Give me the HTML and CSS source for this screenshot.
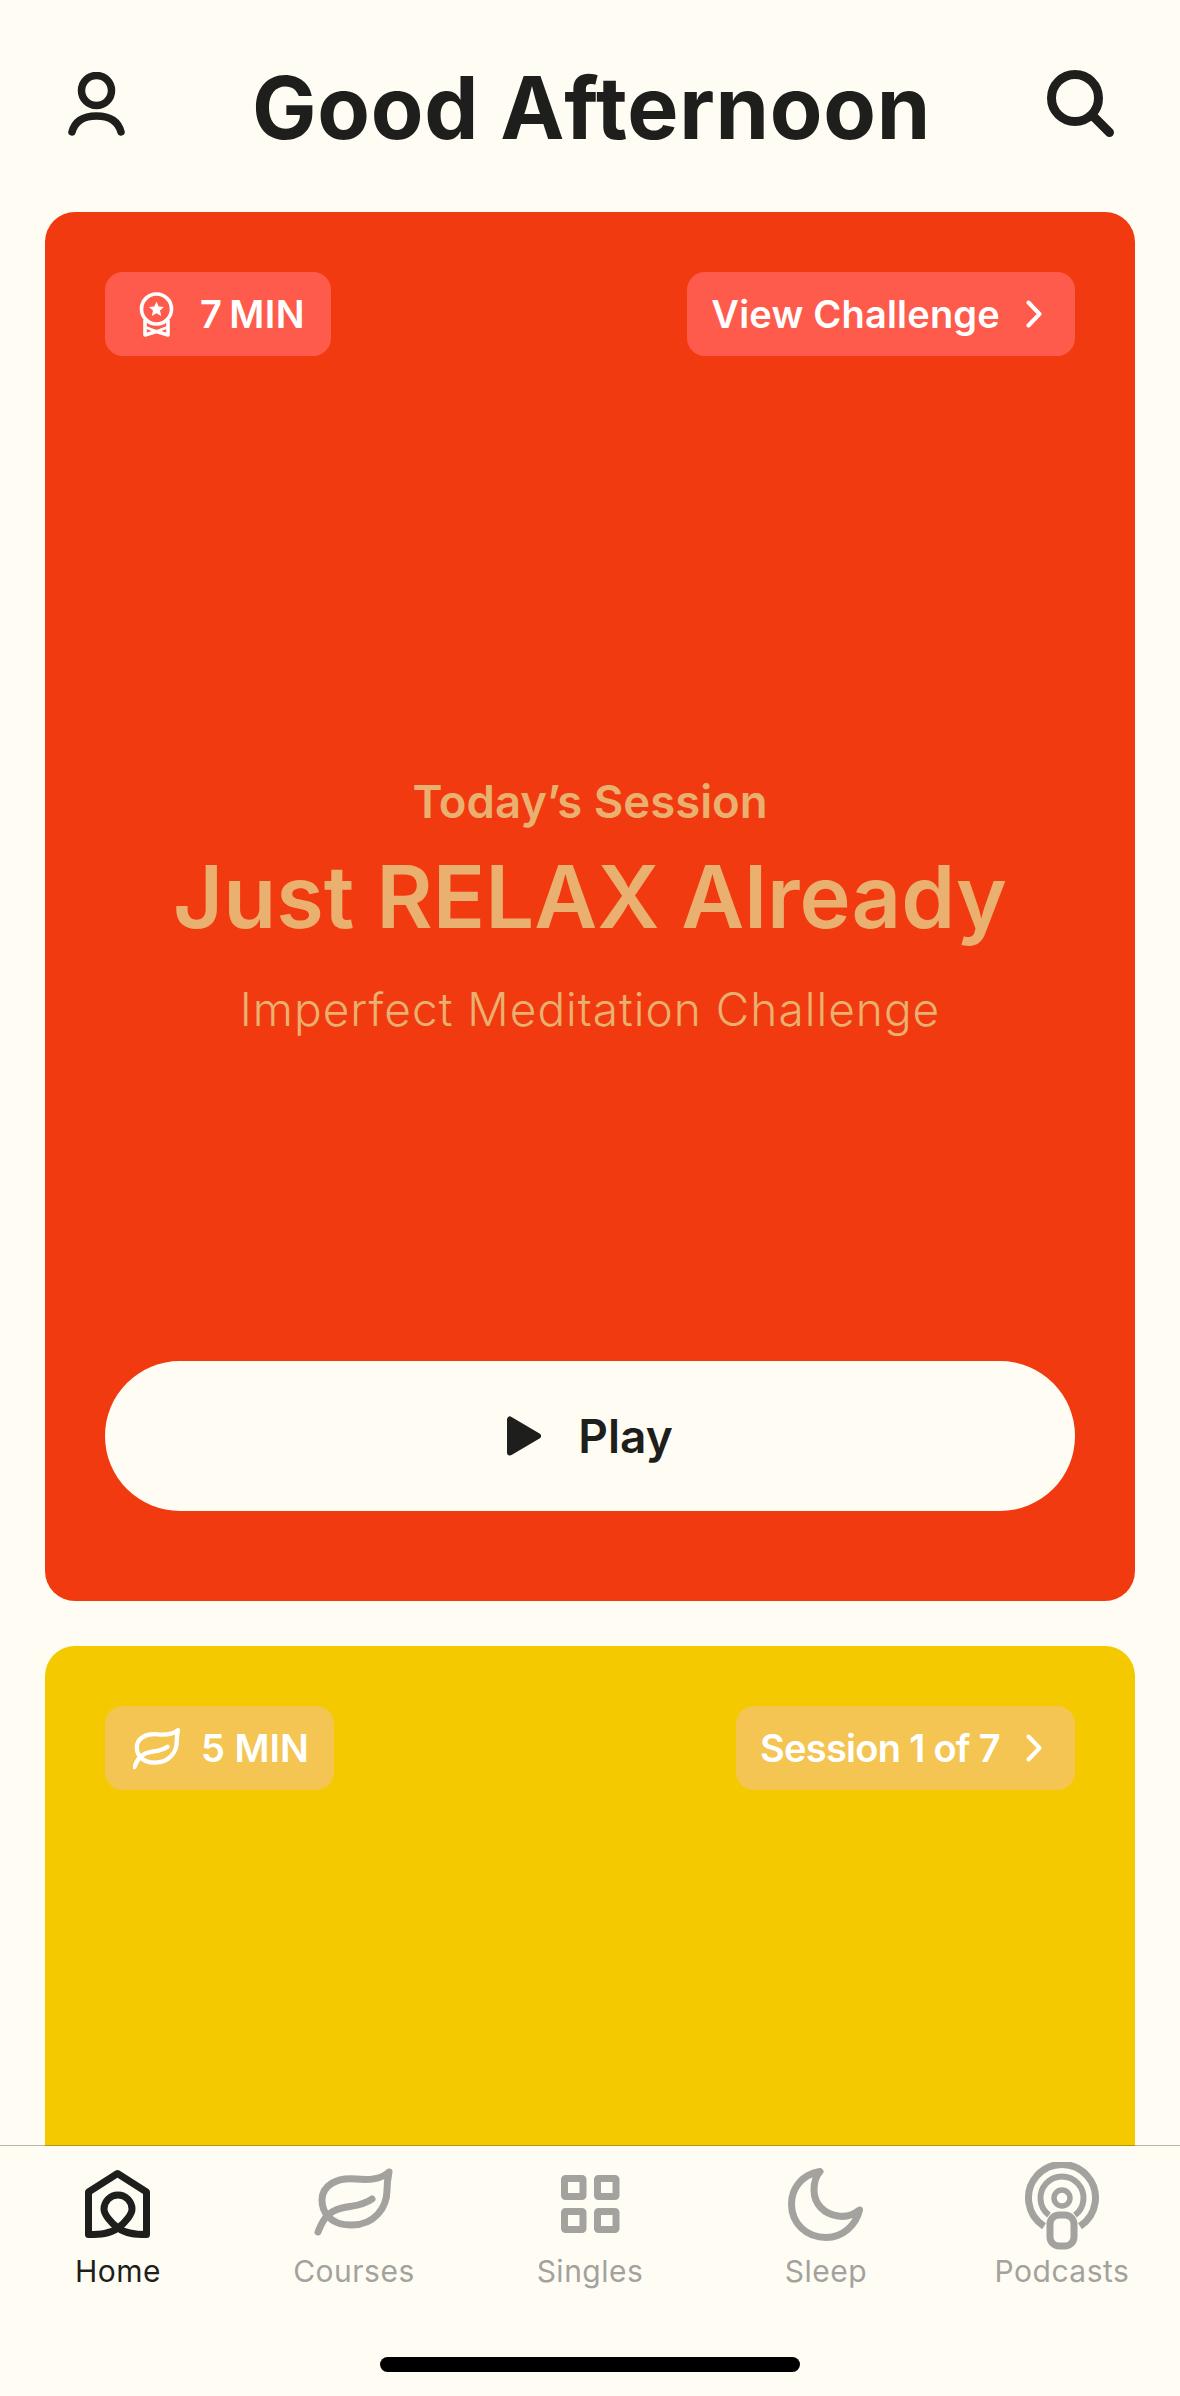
FILE: index.html
```html
<!DOCTYPE html>
<html lang="en">
<head>
    <meta charset="UTF-8">
    <meta name="viewport" content="width=device-width, initial-scale=1.0">
    <title>Good Afternoon</title>
    <link rel="stylesheet" href="styles.css">
</head>
<body>

<div class="page">
    <header class="topbar">
        <svg class="icon-user" viewBox="0 0 57 64" fill="none" stroke="#1e1e1c" stroke-width="7.5" stroke-linecap="round">
            <circle cx="28.5" cy="18.500" r="15"/>
            <path d="M4 60C7 49 16 44 28.500 44S50 49 53 60"/>
        </svg>
        <h1>Good Afternoon</h1>
        <svg class="icon-search" viewBox="0 0 68 68" fill="none" stroke="#1e1e1c" stroke-width="9" stroke-linecap="round">
            <circle cx="28" cy="28" r="23.5"/>
            <path d="M46 46L62.500 62.500"/>
        </svg>
    </header>

    <main class="feed">
        <!-- Today's session -->
        <section class="card card-red">
            <div class="card-top">
                <div class="badge badge-medal">
                    <svg class="icon-medal" viewBox="0 0 35 45" fill="none" stroke="#fff" stroke-width="3.6" stroke-linejoin="round">
                        <circle cx="17.5" cy="17" r="15"/>
                        <path d="M6 28V43L17.500 39.500L29 43V28"/>
                        <path d="M6 35L17.500 39.500L29 35" stroke-width="2.600"/>
                        <path d="M17.500 9.500L19.700 14.400L25 15L21 18.600L22.200 23.900L17.500 21.200L12.800 23.900L14 18.600L10 15L15.300 14.400Z" fill="#fff" stroke="none"/>
                    </svg>
                    <span>7&#8201;MIN</span>
                </div>
                <a class="badge badge-link" href="#">
                    <span>View Challenge</span>
                    <svg class="icon-chevron" viewBox="0 0 16 28" fill="none" stroke="#fff" stroke-width="4" stroke-linecap="round" stroke-linejoin="round"><path d="M2.500 2.500L13.500 14L2.500 25.500"/></svg>
                </a>
            </div>
            <div class="session">
                <p class="session-label">Today’s Session</p>
                <h2>Just RELAX Already</h2>
                <p class="session-sub">Imperfect Meditation Challenge</p>
            </div>
            <button class="play-btn">
                <svg class="icon-play" viewBox="0 0 34 40" fill="#1e1e1c" stroke="#1e1e1c" stroke-width="6" stroke-linejoin="round"><path d="M3 3.500V36.500L31 20Z"/></svg>
                <span>Play</span>
            </button>
        </section>

        <!-- Next course -->
        <section class="card card-yellow">
            <div class="card-top">
                <div class="badge badge-leaf">
                    <svg class="icon-leaf" viewBox="14 5 76 70" fill="none" stroke="#fff" stroke-width="7" stroke-linecap="round" stroke-linejoin="round">
                        <path d="M87 10C78 18 66 18 54 17C34 15 20 24 20 38C20 44 22 50 26 54C32 62 42 63 50 63C72 63 85 46 85 28C85 20 86 15 87 10Z"/>
                        <path d="M16 70C20 60 24 52 34 48C44 43 58 46 70 37"/>
                    </svg>
                    <span>5 MIN</span>
                </div>
                <a class="badge badge-link" href="#">
                    <span>Session 1 of 7</span>
                    <svg class="icon-chevron" viewBox="0 0 16 28" fill="none" stroke="#fff" stroke-width="4" stroke-linecap="round" stroke-linejoin="round"><path d="M2.500 2.500L13.500 14L2.500 25.500"/></svg>
                </a>
            </div>
        </section>
    </main>

    <nav class="tabbar">
        <a class="tab active" href="#">
            <svg viewBox="0 0 100 88" fill="none" stroke-width="7" stroke-linejoin="round">
                <path d="M50 66C42 72 32 72.500 20.500 72.500V30L49.500 11.500L78.500 30V72.500C68 72.500 58 72 50 66C42 60 36 52 36 47A14 14 0 0 1 64 47C64 52 58 60 50 66Z"/>
            </svg>
            <span>Home</span>
        </a>
        <a class="tab" href="#">
            <svg viewBox="2 0 100 88" fill="none" stroke-width="7" stroke-linecap="round" stroke-linejoin="round">
                <path d="M87 10C78 18 66 18 54 17C34 15 20 24 20 38C20 44 22 50 26 54C32 62 42 63 50 63C72 63 85 46 85 28C85 20 86 15 87 10Z"/>
                <path d="M16 70C20 60 24 52 34 48C44 43 58 46 70 37"/>
            </svg>
            <span>Courses</span>
        </a>
        <a class="tab" href="#">
            <svg viewBox="0 0 100 88" fill="none" stroke-width="7" stroke-linejoin="round">
                <rect x="24.500" y="16.500" width="18.500" height="18" rx="1"/>
                <rect x="57.500" y="16.500" width="18.500" height="18" rx="1"/>
                <rect x="24.500" y="49.500" width="18.500" height="18" rx="1"/>
                <rect x="57.500" y="49.500" width="18.500" height="18" rx="1"/>
            </svg>
            <span>Singles</span>
        </a>
        <a class="tab" href="#">
            <svg viewBox="0 0 100 88" fill="none" stroke-width="7" stroke-linejoin="round">
                <path d="M44 9.500C24 13 15.500 28 15.500 42C15.500 62 31 75.500 50 75.500C67 75.500 80 63 83.500 48C76 54 68 55 62 54C48 52 38 42 38 28C38 20 40 14 44 9.500Z"/>
            </svg>
            <span>Sleep</span>
        </a>
        <a class="tab" href="#">
            <svg viewBox="0 0 100 88" fill="none" stroke-width="7">
                <path d="M32 64.200A33.500 33.500 0 1 1 68 64.200"/>
                <path d="M37 53.100A21.500 21.500 0 1 1 63 53.100" stroke-width="6"/>
                <circle cx="50" cy="36" r="8" stroke-width="5.500"/>
                <rect class="tab-mic" x="38" y="53" width="24" height="31" rx="9"/>
            </svg>
            <span>Podcasts</span>
        </a>
    </nav>

    <div class="home-bar"></div>
</div>

</body>
</html>
```

FILE: styles.css
```css
* {
    box-sizing: border-box;
}

body {
    margin: 0;
    background-color: #fffdf3;
    color: #1e1e1c;
    font-family: 'Inter', 'Liberation Sans', sans-serif;
}

a {
    text-decoration: none;
    color: inherit;
}

svg {
    display: block;
    flex: none;
}

.page {
    display: flex;
    flex-direction: column;
    height: 2396px;
    overflow: hidden;
}

/* top bar */
.topbar {
    display: grid;
    grid-template-columns: 1fr auto 1fr;
    align-items: center;
    flex: none;
    height: 212px;
    padding: 0 65px 4px 68px;
}

.topbar h1 {
    margin: 8px 0 0;
    font-size: 86px;
    font-weight: 700;
    letter-spacing: 0.7px;
    line-height: 1;
    white-space: nowrap;
}

.icon-user {
    width: 57px;
    height: 64px;
}

.icon-search {
    width: 68px;
    height: 68px;
    justify-self: end;
}

/* cards */
.feed {
    flex: 1;
    min-height: 0;
    overflow: hidden;
    padding: 0 45px;
}

.card {
    display: flex;
    flex-direction: column;
    height: 1389px;
    margin-bottom: 45px;
    padding: 60px 60px 90px;
    border-radius: 30px;
}

.card-red {
    background-color: #f23a10;
}

.card-yellow {
    background-color: #f5c900;
}

.card-top {
    display: flex;
    justify-content: space-between;
}

.badge {
    display: flex;
    align-items: center;
    height: 84px;
    border-radius: 18px;
    color: #fff;
    font-size: 38px;
    font-weight: 600;
    white-space: nowrap;
}

.card-red .badge {
    background-color: #ff5b4d;
}

.card-yellow .badge {
    background-color: #f4c553;
}

.card-red .badge-link {
    letter-spacing: 0.2px;
}

.card-yellow .badge-link {
    letter-spacing: -0.7px;
}

.badge-medal {
    gap: 26px;
    padding: 0 26px 0 34px;
    letter-spacing: 0.5px;
}

.badge-leaf {
    gap: 21px;
    padding: 0 25px 0 28px;
}

.badge-link {
    gap: 26px;
    padding: 0 33px 0 24px;
}

.icon-medal {
    width: 35px;
    height: 45px;
}

.icon-leaf {
    width: 47px;
    height: 43px;
}

.icon-chevron {
    width: 16px;
    height: 28px;
}

.session {
    margin-top: 420px;
    color: #e9b06f;
    text-align: center;
}

.session p {
    margin: 0;
}

.session-label {
    font-size: 45.5px;
    font-weight: 600;
    line-height: 52px;
}

.session h2 {
    margin: 19px 0 35px;
    font-size: 86.6px;
    font-weight: 600;
    line-height: 100px;
    white-space: nowrap;
}

.session-sub {
    font-size: 46px;
    font-weight: 300;
    letter-spacing: 1px;
    line-height: 54px;
}

.play-btn {
    display: flex;
    align-items: center;
    justify-content: center;
    gap: 37px;
    width: 100%;
    height: 150px;
    margin-top: auto;
    border: 0;
    border-radius: 75px;
    background-color: #fffdf3;
    color: #1e1e1c;
    font-family: inherit;
    font-size: 46px;
    font-weight: 600;
}

.icon-play {
    width: 34px;
    height: 40px;
}

/* tab bar */
.tabbar {
    display: grid;
    grid-template-columns: repeat(5, 1fr);
    flex: none;
    height: 250px;
    padding-top: 16px;
    background-color: #fffdf3;
    box-shadow: 0 -1px 0 rgba(60, 55, 30, 0.35);
}

.tab {
    display: flex;
    flex-direction: column;
    align-items: center;
    color: #a3a29e;
    font-size: 30px;
    letter-spacing: 0.5px;
    line-height: 36px;
}

.tab svg {
    width: 100px;
    height: 88px;
    margin-bottom: 3px;
    stroke: #a3a29e;
}

.tab.active {
    color: #1e1e1c;
}

.tab.active svg {
    stroke: #1e1e1c;
}

.tab-mic {
    fill: #fffdf3;
}

.home-bar {
    position: absolute;
    top: 2357px;
    left: 380px;
    width: 420px;
    height: 15px;
    border-radius: 8px;
    background-color: #000;
}
```
